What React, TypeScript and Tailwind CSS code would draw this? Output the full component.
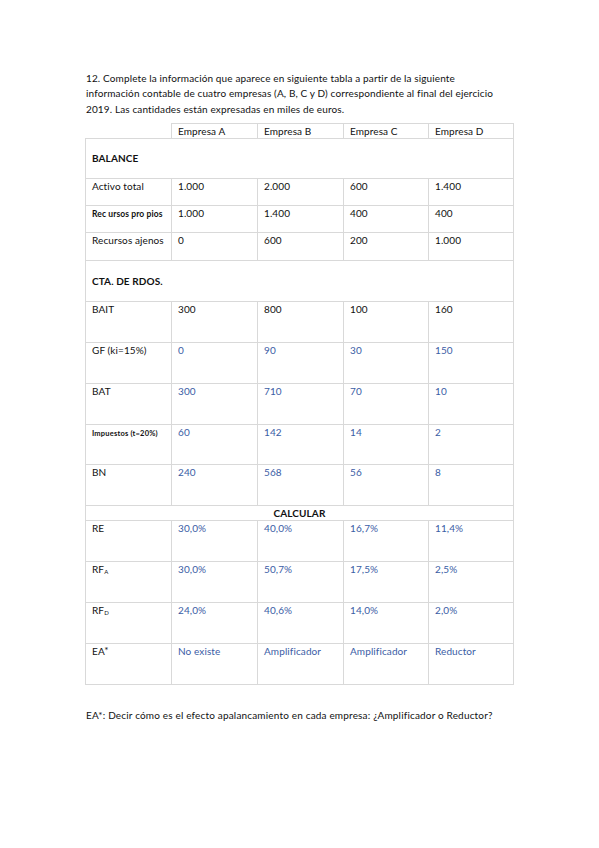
const font = { fontFamily: "Lato, 'Liberation Sans', sans-serif" }

type Row = {
  label: React.ReactNode
  values: string[]
  blue?: boolean
  h: string
}

const balance: Row[] = [
  { label: "Activo total", values: ["1.000", "2.000", "600", "1.400"], h: "h-[27px]" },
  {
    label: <span className="text-[8.5px] font-bold tracking-[0.1px]">Rec ursos pro pios</span>,
    values: ["1.000", "1.400", "400", "400"],
    h: "h-[27px]",
  },
  { label: "Recursos ajenos", values: ["0", "600", "200", "1.000"], h: "h-[28px]" },
]

const resultados: Row[] = [
  { label: "BAIT", values: ["300", "800", "100", "160"], h: "h-[41px]" },
  { label: "GF (ki=15%)", values: ["0", "90", "30", "150"], blue: true, h: "h-[41px]" },
  { label: "BAT", values: ["300", "710", "70", "10"], blue: true, h: "h-[41px]" },
  {
    label: <span className="text-[7.5px] font-bold tracking-[0.2px]">Impuestos (t=20%)</span>,
    values: ["60", "142", "14", "2"],
    blue: true,
    h: "h-[40px]",
  },
  { label: "BN", values: ["240", "568", "56", "8"], blue: true, h: "h-[41px]" },
]

const calcular: Row[] = [
  { label: "RE", values: ["30,0%", "40,0%", "16,7%", "11,4%"], blue: true, h: "h-[41px]" },
  {
    label: (
      <span>
        RF<sub className="text-[6px]">A</sub>
      </span>
    ),
    values: ["30,0%", "50,7%", "17,5%", "2,5%"],
    blue: true,
    h: "h-[41px]",
  },
  {
    label: (
      <span>
        RF<sub className="text-[6px]">D</sub>
      </span>
    ),
    values: ["24,0%", "40,6%", "14,0%", "2,0%"],
    blue: true,
    h: "h-[41px]",
  },
  {
    label: (
      <span>
        EA<span className="relative -top-[1px]">*</span>
      </span>
    ),
    values: ["No existe", "Amplificador", "Amplificador", "Reductor"],
    blue: true,
    h: "h-[41px]",
  },
]

const cell = "border-[1.5px] border-[#d9d9d9] px-[6px] pt-[1px] align-top"

function DataRow({ row }: { row: Row }) {
  return (
    <tr className={row.h}>
      <td className={cell}>{row.label}</td>
      {row.values.map((v, i) => (
        <td key={i} className={`${cell} ${row.blue ? "text-[#3a5da5]" : ""}`}>
          {v}
        </td>
      ))}
    </tr>
  )
}

export default function App() {
  return (
    <div className="min-h-[848px] w-[599px] bg-white text-[#111]" style={font}>
      <div className="pl-[86px] pr-[10px] pt-[71px]">
        <p className="text-[10px] leading-[15.3px] tracking-[0.13px]">
          12. Complete la información que aparece en siguiente tabla a partir de la siguiente
          <br />
          información contable de cuatro empresas (A, B, C y D) correspondiente al final del ejercicio
          <br />
          2019. Las cantidades están expresadas en miles de euros.
        </p>

        <table className="-ml-[1px] mt-[6px] w-[428px] table-fixed border-collapse text-[10px] leading-[12px] tracking-[0.1px]">
          <colgroup>
            <col className="w-[86px]" />
            <col className="w-[86px]" />
            <col className="w-[86px]" />
            <col className="w-[85px]" />
            <col className="w-[85px]" />
          </colgroup>
          <tbody>
            <tr className="h-[15px]">
              <td className="border-l-0 border-t-0 border-[#d9d9d9]" />
              {["Empresa A", "Empresa B", "Empresa C", "Empresa D"].map((t) => (
                <td key={t} className="border-[1.5px] border-[#d9d9d9] px-[6px] py-[1px]">
                  {t}
                </td>
              ))}
            </tr>
            <tr className="h-[40px]">
              <td colSpan={5} className="border-[1.5px] border-[#d9d9d9] px-[6px] align-middle font-bold">
                BALANCE
              </td>
            </tr>
            {balance.map((r, i) => (
              <DataRow key={i} row={r} />
            ))}
            <tr className="h-[41px]">
              <td colSpan={5} className="border-[1.5px] border-[#d9d9d9] px-[6px] align-middle font-bold">
                CTA. DE RDOS.
              </td>
            </tr>
            {resultados.map((r, i) => (
              <DataRow key={i} row={r} />
            ))}
            <tr className="h-[15px]">
              <td colSpan={5} className="border-[1.5px] border-[#d9d9d9] text-center font-bold">
                CALCULAR
              </td>
            </tr>
            {calcular.map((r, i) => (
              <DataRow key={i} row={r} />
            ))}
          </tbody>
        </table>

        <p className="mt-[23px] text-[10px] leading-[15px] tracking-[0.17px]">
          EA*: Decir cómo es el efecto apalancamiento en cada empresa: ¿Amplificador o Reductor?
        </p>
      </div>
    </div>
  )
}
